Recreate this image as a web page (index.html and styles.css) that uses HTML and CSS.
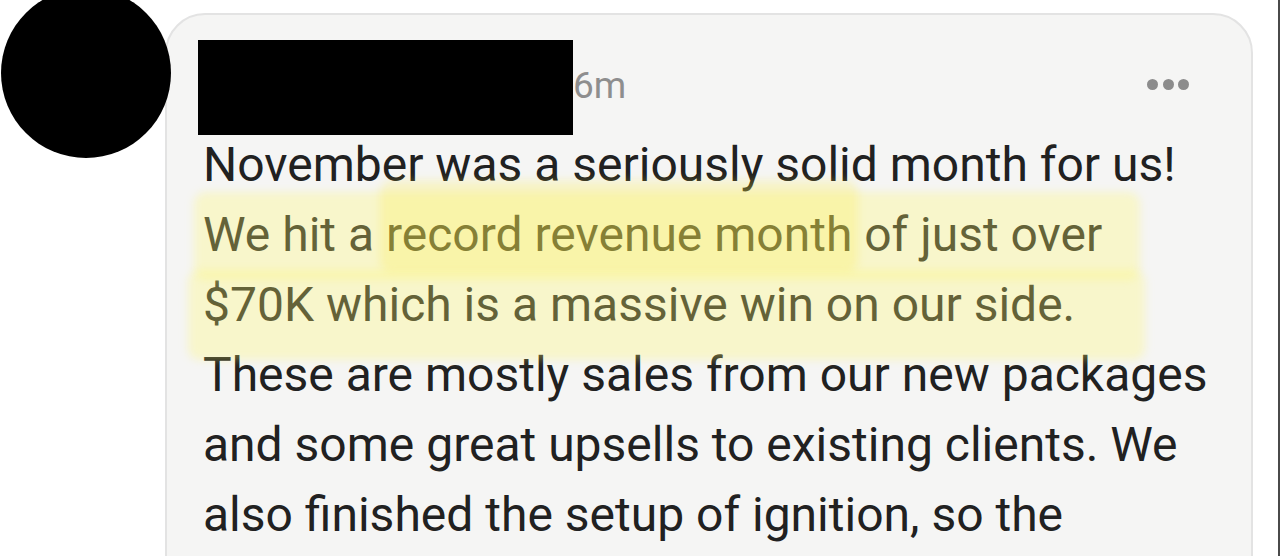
FILE: index.html
```html
<!DOCTYPE html>
<html lang="en">
<head>
  <meta charset="UTF-8" />
  <meta name="viewport" content="width=device-width, initial-scale=1.0"/>
  <title>Post</title>

  <link rel="stylesheet" href="styles.css">
</head>
<body>

  <div class="screen">
    <!-- Post row -->
    <div class="post">
      <div class="avatar"></div>

      <div class="card">
        <!-- Marker highlights drawn over the text -->
        <span class="marker marker-line2"></span>
        <span class="marker marker-strong"></span>
        <span class="marker marker-line3"></span>

        <div class="card-header">
          <div class="name-redacted"></div>
          <span class="time">6m</span>
          <div class="more">
            <span></span><span></span><span></span>
          </div>
        </div>

        <p class="post-text">
          November was a seriously solid month for us! We hit a record revenue month of just over $70K which is a massive win on our side. These are mostly sales from our new packages and some great upsells to existing clients. We also finished the setup of ignition, so the
        </p>
      </div>
    </div>
  </div>

</body>
</html>
```

FILE: styles.css
```css
* {
  box-sizing: border-box;
}

body {
  margin: 0;
  background: #fff;
  font-family: Roboto, "Noto Sans", sans-serif;
  overflow: hidden;
}

.screen {
  width: 1280px;
  height: 556px;
  border-right: 2px solid #4a4a4a;
  overflow: hidden;
}

.post {
  display: flex;
  align-items: flex-start;
}

.avatar {
  flex: none;
  width: 170px;
  height: 170px;
  margin: -12px 0 0 1px;
  border-radius: 50%;
  background: #000;
  position: relative;
  z-index: 1;
}

.card {
  position: relative;
  flex: none;
  width: 1088px;
  min-height: 640px;
  margin: 13px 0 0 -6px;
  padding: 25px 36px 0 36px;
  background: #f5f5f4;
  border: 2px solid #e3e3e3;
  border-radius: 40px;
}

.card-header {
  display: flex;
  align-items: center;
  margin-left: -5px;
}

.name-redacted {
  width: 375px;
  height: 95px;
  background: #000;
}

.time {
  margin-bottom: 5px;
  font-size: 37px;
  color: #8e8e8e;
}

.more {
  display: flex;
  gap: 4.5px;
  margin: 0 26px 6px auto;
}

.more span {
  width: 11px;
  height: 11px;
  border-radius: 50%;
  background: #8c8c8c;
}

.post-text {
  margin: -5px 0 0;
  font-size: 48px;
  line-height: 70px;
  color: #212121;
}

/* highlighter strokes */
.marker {
  position: absolute;
  z-index: 2;
  border-radius: 12px;
  pointer-events: none;
  filter: blur(4px);
}

.marker-line2 {
  left: 27px;
  top: 177px;
  width: 946px;
  height: 88px;
  background: rgba(255, 250, 110, 0.3);
}

.marker-strong {
  left: 213px;
  top: 165px;
  width: 478px;
  height: 92px;
  background: rgba(255, 236, 50, 0.22);
}

.marker-line3 {
  left: 21px;
  top: 255px;
  width: 957px;
  height: 90px;
  background: rgba(255, 250, 110, 0.3);
}
```
